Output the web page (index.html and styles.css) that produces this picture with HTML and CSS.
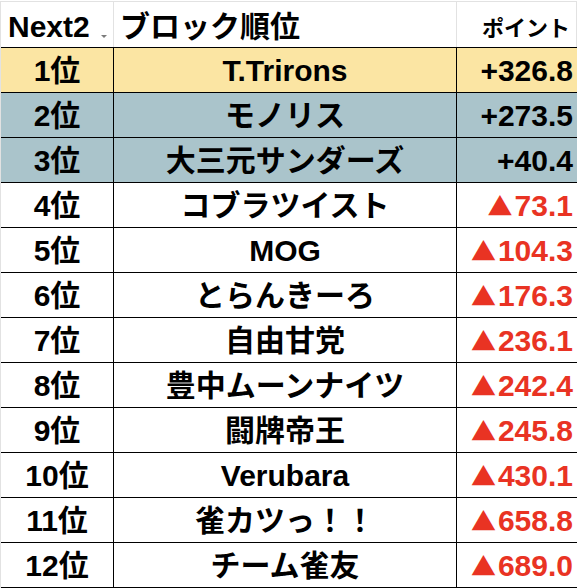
FILE: index.html
```html
<!DOCTYPE html>
<html lang="ja">
<head>
<meta charset="utf-8">
<link rel="stylesheet" href="styles.css">
</head>
<body>
<div class="sheet">
  <div class="row head">
    <div class="cell c1"><span>Next2</span><span class="filter"></span></div>
    <div class="cell c2">ブロック順位</div>
    <div class="cell c3"><span class="small">ポイント</span></div>
  </div>
  <div class="row gold"><div class="cell c1">1位</div><div class="cell c2">T.Trirons</div><div class="cell c3">+326.8</div></div>
  <div class="row blue"><div class="cell c1">2位</div><div class="cell c2">モノリス</div><div class="cell c3">+273.5</div></div>
  <div class="row blue"><div class="cell c1">3位</div><div class="cell c2">大三元サンダーズ</div><div class="cell c3">+40.4</div></div>
  <div class="row"><div class="cell c1">4位</div><div class="cell c2">コブラツイスト</div><div class="cell c3 neg"><span class="tri">▲</span>73.1</div></div>
  <div class="row"><div class="cell c1">5位</div><div class="cell c2">MOG</div><div class="cell c3 neg"><span class="tri">▲</span>104.3</div></div>
  <div class="row"><div class="cell c1">6位</div><div class="cell c2">とらんきーろ</div><div class="cell c3 neg"><span class="tri">▲</span>176.3</div></div>
  <div class="row"><div class="cell c1">7位</div><div class="cell c2">自由甘党</div><div class="cell c3 neg"><span class="tri">▲</span>236.1</div></div>
  <div class="row"><div class="cell c1">8位</div><div class="cell c2">豊中ムーンナイツ</div><div class="cell c3 neg"><span class="tri">▲</span>242.4</div></div>
  <div class="row"><div class="cell c1">9位</div><div class="cell c2">闘牌帝王</div><div class="cell c3 neg"><span class="tri">▲</span>245.8</div></div>
  <div class="row"><div class="cell c1">10位</div><div class="cell c2">Verubara</div><div class="cell c3 neg"><span class="tri">▲</span>430.1</div></div>
  <div class="row"><div class="cell c1">11位</div><div class="cell c2">雀カツっ！！</div><div class="cell c3 neg"><span class="tri">▲</span>658.8</div></div>
  <div class="row"><div class="cell c1">12位</div><div class="cell c2">チーム雀友</div><div class="cell c3 neg"><span class="tri">▲</span>689.0</div></div>
</div>
</body>
</html>
```
FILE: styles.css
```css
html, body {
  margin: 0;
  padding: 0;
  background: #ffffff;
}
.sheet {
  width: 576px;
  margin-top: 1px;
  border-top: 1px solid #e2e2e2;
  border-left: 1px solid #e2e2e2;
  font-family: "Liberation Sans", "Noto Sans CJK JP", sans-serif;
  font-weight: bold;
  font-size: 30px;
  color: #000000;
}
.row {
  display: grid;
  grid-template-columns: 113px 343px 120px;
  box-sizing: border-box;
  height: 45px;
  border-bottom: 1px solid #000000;
}
.row.head {
  height: 46px;
}
.cell {
  display: flex;
  align-items: center;
  justify-content: center;
  box-sizing: border-box;
  border-right: 1px solid #000000;
  white-space: nowrap;
  line-height: 1;
  padding-top: 1px;
}
.cell.c3 {
  justify-content: flex-end;
  align-items: baseline;
  padding-top: 8px;
  padding-right: 4px;
  border-right: 0;
}
.head .cell {
  border-right: 1px solid #e2e2e2;
  align-items: flex-end;
  padding-top: 0;
  padding-bottom: 5px;
}
.head .c1 {
  justify-content: flex-start;
  padding-left: 7px;
  position: relative;
}
.head .c2 {
  justify-content: flex-start;
  padding-left: 6px;
}
.head .c3 {
  padding-right: 6px;
  padding-bottom: 7px;
}
.small {
  font-size: 22px;
}
.filter {
  position: absolute;
  left: 100px;
  top: 33px;
  width: 0;
  height: 0;
  border-left: 3px solid transparent;
  border-right: 3px solid transparent;
  border-top: 3px solid #7b7b7b;
}
.gold {
  background: #fbe5a3;
}
.blue {
  background: #aac4cb;
}
.neg {
  color: #e93323;
}
.tri {
  font-family: "Noto Sans CJK JP", sans-serif;
  font-weight: normal;
  font-size: 25px;
  margin-right: 2px;
}
```
